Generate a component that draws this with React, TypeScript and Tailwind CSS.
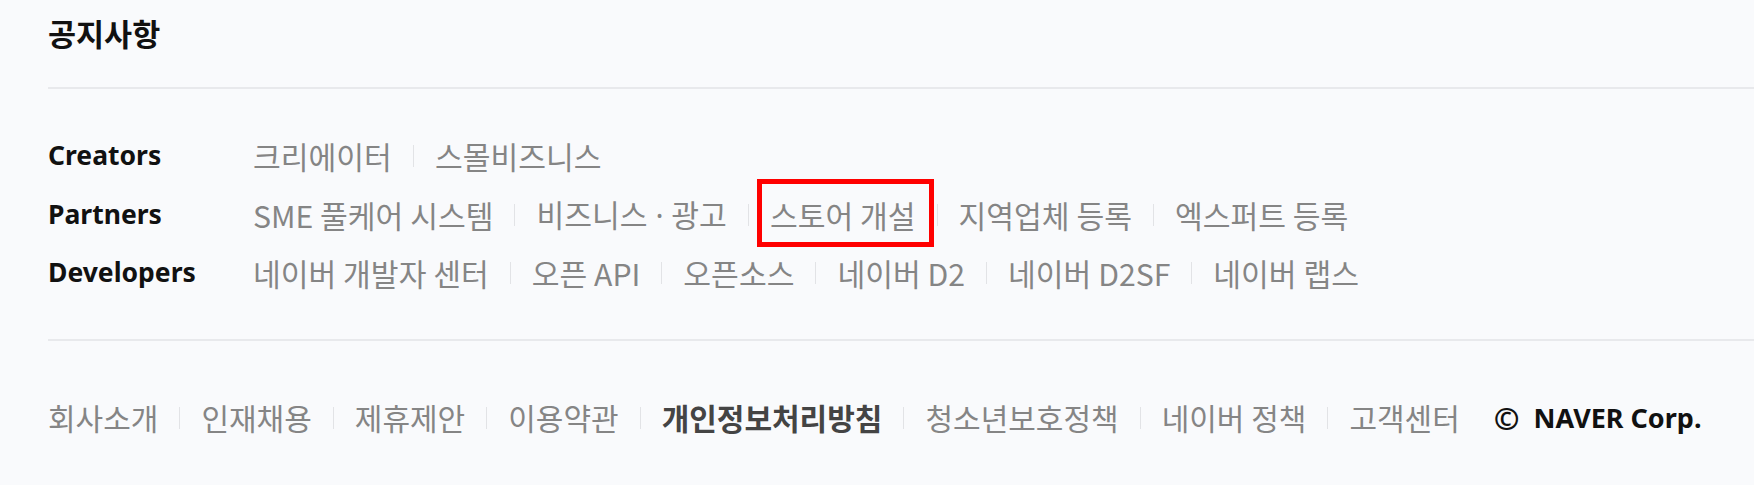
const rows = [
  { label: "Creators", links: ["크리에이터", "스몰비즈니스"] },
  {
    label: "Partners",
    links: ["SME 풀케어 시스템", "비즈니스 · 광고", "스토어 개설", "지역업체 등록", "엑스퍼트 등록"],
  },
  {
    label: "Developers",
    links: ["네이버 개발자 센터", "오픈 API", "오픈소스", "네이버 D2", "네이버 D2SF", "네이버 랩스"],
  },
];

const bottomLinks = [
  "회사소개",
  "인재채용",
  "제휴제안",
  "이용약관",
  "개인정보처리방침",
  "청소년보호정책",
  "네이버 정책",
  "고객센터",
];

function Sep() {
  return <span className="mx-[21px] inline-block h-[22px] w-px bg-[#e2e3e6]" />;
}

function LinkText({ text }: { text: string }) {
  // the middle dot renders full-width in the CJK font, so set it in Noto Sans
  if (!text.includes("·")) return <>{text}</>;
  const [a, b] = text.split(" · ");
  return (
    <>
      {a}
      <span className="font-['Noto_Sans',sans-serif]"> · </span>
      {b}
    </>
  );
}

export default function App() {
  return (
    <div className="h-[485px] w-full bg-[#f9fafc] pl-[48px] font-['Noto_Sans_CJK_KR',sans-serif]">
      {/* 공지사항 */}
      <div className="pt-[14px]">
        <h2 className="h-[38px] text-[30.5px] font-bold leading-[38px] text-[#111]">공지사항</h2>
      </div>
      <div className="mt-[35px] h-[2px] bg-[#e8e9ec]" />

      {/* link groups */}
      <div className="mt-[38px] flex flex-col">
        {rows.map((row) => (
          <div key={row.label} className="flex h-[58.5px] items-center">
            <span className="w-[205px] shrink-0 font-['Noto_Sans','Noto_Sans_CJK_KR',sans-serif] text-[26.5px] font-bold text-[#111]">
              {row.label}
            </span>
            <div className="flex items-center text-[30.2px] leading-[30px] text-[#858585]">
              {row.links.map((link, i) => (
                <div key={link} className="flex items-center">
                  {i > 0 && <Sep />}
                  {link === "스토어 개설" ? (
                    <a href="#" className="relative">
                      {link}
                      <span className="pointer-events-none absolute -bottom-[17px] -left-[13px] -right-[18px] -top-[21px] border-[5px] border-[#ff0000]" />
                    </a>
                  ) : (
                    <a href="#">
                      <LinkText text={link} />
                    </a>
                  )}
                </div>
              ))}
            </div>
          </div>
        ))}
      </div>

      <div className="mt-[36px] h-[2px] bg-[#e8e9ec]" />

      {/* bottom links */}
      <div className="mt-[48px] flex h-[58.5px] items-center text-[30px] text-[#858585]">
        {bottomLinks.map((link, i) => (
          <div key={link} className="flex items-center">
            {i > 0 && <Sep />}
            <a href="#" className={link === "개인정보처리방침" ? "font-bold text-[#444]" : ""}>
              {link}
            </a>
          </div>
        ))}
        <span className="ml-[34px] flex items-center font-['Noto_Sans','Noto_Sans_CJK_KR',sans-serif] text-[27px] font-bold text-[#111]">
          <span className="text-[31px]">©</span>
          <span className="ml-[14px]">NAVER Corp.</span>
        </span>
      </div>
    </div>
  );
}
